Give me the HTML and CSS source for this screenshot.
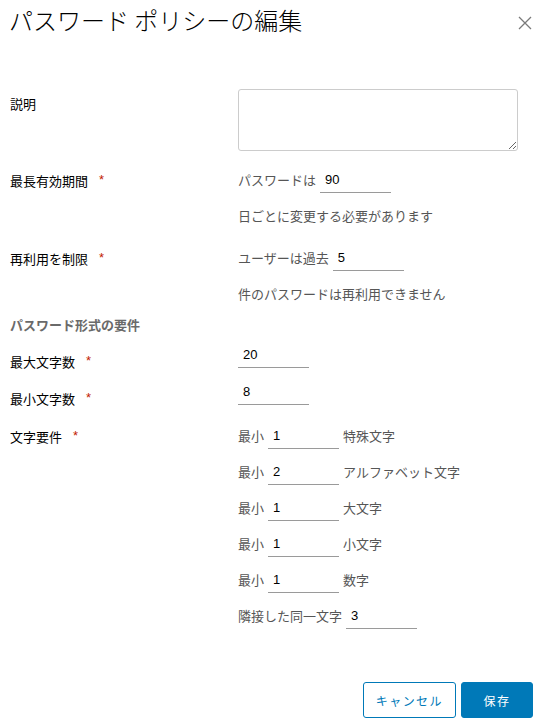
FILE: index.html
```html
<!DOCTYPE html>
<html lang="ja">
<head>
<meta charset="utf-8">
<title>パスワード ポリシーの編集</title>
<link rel="stylesheet" href="styles.css">
</head>
<body>
<div class="dialog">
  <header class="dialog-header">
    <h1 class="title">パスワード ポリシーの編集</h1>
    <button class="close" type="button" aria-label="閉じる">
      <svg width="14" height="14" viewBox="0 0 14 14"><path d="M1 1L13 13M13 1L1 13" stroke="#7a7a7a" stroke-width="1.3" fill="none"/></svg>
    </button>
  </header>

  <form class="form">
    <div class="row row-desc">
      <label class="label label-desc">説明</label>
      <div class="control"><textarea class="textarea"></textarea></div>
    </div>

    <div class="row row-maxage">
      <label class="label">最長有効期間<span class="req">*</span></label>
      <div class="control">
        <div class="line"><span class="txt">パスワードは</span><input class="field" value="90"></div>
        <div class="help">日ごとに変更する必要があります</div>
      </div>
    </div>

    <div class="row row-reuse">
      <label class="label">再利用を制限<span class="req">*</span></label>
      <div class="control">
        <div class="line"><span class="txt">ユーザーは過去</span><input class="field" value="5"></div>
        <div class="help">件のパスワードは再利用できません</div>
      </div>
    </div>

    <h2 class="section">パスワード形式の要件</h2>

    <div class="row row-maxlen">
      <label class="label label-low">最大文字数<span class="req">*</span></label>
      <div class="control"><div class="line"><input class="field" value="20"></div></div>
    </div>

    <div class="row row-minlen">
      <label class="label label-low">最小文字数<span class="req">*</span></label>
      <div class="control"><div class="line"><input class="field" value="8"></div></div>
    </div>

    <div class="row row-chars">
      <label class="label">文字要件<span class="req">*</span></label>
      <div class="control stack">
        <div class="line"><span class="txt">最小</span><input class="field" value="1"><span class="txt">特殊文字</span></div>
        <div class="line"><span class="txt">最小</span><input class="field" value="2"><span class="txt">アルファベット文字</span></div>
        <div class="line"><span class="txt">最小</span><input class="field" value="1"><span class="txt">大文字</span></div>
        <div class="line"><span class="txt">最小</span><input class="field" value="1"><span class="txt">小文字</span></div>
        <div class="line"><span class="txt">最小</span><input class="field" value="1"><span class="txt">数字</span></div>
        <div class="line"><span class="txt">隣接した同一文字</span><input class="field" value="3"></div>
      </div>
    </div>
  </form>

  <footer class="footer">
    <button class="btn btn-outline" type="button">キャンセル</button>
    <button class="btn btn-primary" type="button">保存</button>
  </footer>
</div>
</body>
</html>
```

FILE: styles.css
```css
html, body {
  margin: 0;
  padding: 0;
  background: #fff;
}

body {
  font-family: "Noto Sans CJK JP", "Liberation Sans", sans-serif;
  font-size: 13px;
  color: #000;
  overflow: hidden;
}

.dialog {
  height: 725px;
  box-sizing: border-box;
  display: flex;
  flex-direction: column;
}

.dialog-header {
  display: flex;
  align-items: flex-start;
  padding: 4px 6px 0 9px;
}

.title {
  margin: 0;
  font-size: 24px;
  line-height: 32px;
  font-weight: 300;
  color: #000;
}

.close {
  margin-left: auto;
  margin-top: 12px;
  padding: 0;
  border: none;
  background: none;
  width: 14px;
  height: 14px;
  display: block;
}

.close svg {
  display: block;
}

.form {
  margin: 53px 0 0;
  padding-left: 10px;
}

.row {
  display: grid;
  grid-template-columns: 228px 1fr;
  align-items: start;
}

.label {
  line-height: 26px;
  color: #000;
}

.label-desc {
  line-height: 20px;
  padding-top: 5px;
}

.label-low {
  padding-top: 6px;
}

.req {
  font-family: "Liberation Sans", sans-serif;
  color: #c21d00;
  margin-left: 11px;
  vertical-align: 2px;
}

.textarea {
  display: block;
  box-sizing: border-box;
  width: 280px;
  height: 62px;
  border: 1px solid #cccccc;
  border-radius: 3px;
  margin: 0;
  padding: 4px 6px;
  font-family: inherit;
  font-size: 13px;
}

.row-maxage { margin-top: 16px; }
.row-reuse { margin-top: 19px; }
.row-maxlen { margin-top: 7px; }
.row-minlen { margin-top: 4px; }
.row-chars { margin-top: 11px; }

.line {
  display: flex;
  align-items: center;
  gap: 4px;
  height: 26px;
}

.stack {
  display: flex;
  flex-direction: column;
  gap: 10px;
}

.txt {
  line-height: 20px;
  color: #565656;
  white-space: nowrap;
}

.field {
  box-sizing: border-box;
  width: 71px;
  height: 26px;
  margin: 0;
  padding: 0 5px;
  border: none;
  border-bottom: 1px solid #9a9a9a;
  border-radius: 0;
  background: transparent;
  font-family: "Liberation Sans", sans-serif;
  font-size: 13px;
  color: #000;
  outline: none;
}

.help {
  margin-top: 13px;
  line-height: 20px;
  color: #565656;
}

.section {
  margin: 11px 0 0;
  font-size: 13px;
  line-height: 20px;
  font-weight: 700;
  color: #6a6a6a;
}

.footer {
  margin-top: auto;
  display: flex;
  justify-content: flex-end;
  gap: 5px;
  padding: 0 5px 7px 0;
}

.btn {
  box-sizing: border-box;
  height: 36px;
  min-width: 72px;
  padding: 0 12px;
  border: 1px solid #0079b8;
  border-radius: 3px;
  font-family: "Noto Sans CJK JP", sans-serif;
  font-size: 12px;
  letter-spacing: 0.12em;
  cursor: pointer;
}

.btn-outline {
  background: #fff;
  color: #0079b8;
}

.btn-primary {
  background: #0079b8;
  color: #fff;
}
```
